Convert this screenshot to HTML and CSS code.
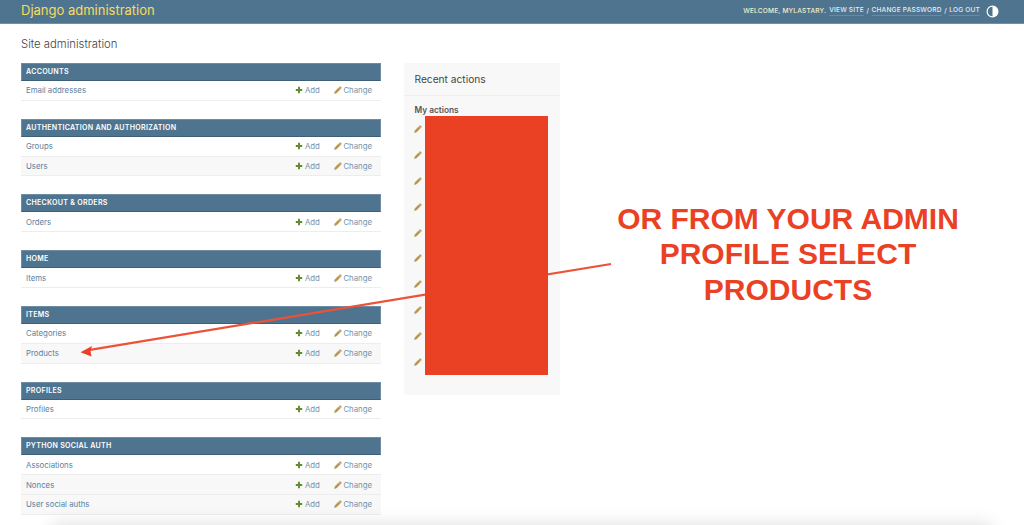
FILE: index.html
```html
<!DOCTYPE html>
<html lang="en">
<head>
<meta charset="utf-8">
<title>Site administration | Django site admin</title>
<link rel="stylesheet" href="styles.css">
</head>
<body>
<svg class="defs" width="0" height="0" aria-hidden="true">
  <defs>
    <symbol id="plus" viewBox="0 0 10 10"><path d="M3.800 1h2.400v2.800H9v2.400H6.200V9H3.800V6.200H1V3.800h2.800z"/></symbol>
    <symbol id="pencil" viewBox="0 0 10 10"><path d="M7.600.6l1.800 1.800-1 1L6.600 1.600zM5.900 2.300l1.800 1.800-4.500 4.500-2.600.8.800-2.600z" stroke-width=".7" stroke-linejoin="round"/></symbol>
  </defs>
</svg>
<header class="header">
  <div class="brand">Django administration</div>
  <div class="tools">
    <span class="welcome">WELCOME, MYLASTARY.</span>
    <a>VIEW SITE</a><span class="sep">/</span><a>CHANGE PASSWORD</a><span class="sep">/</span><a>LOG OUT</a>
    <svg class="theme" viewBox="0 0 14 14"><circle cx="7" cy="7" r="5.800" fill="none" stroke="#fff" stroke-width="1.300"/><path d="M7 1.200a5.800 5.800 0 0 1 0 11.600z" fill="#fff"/></svg>
  </div>
</header>
<main class="content">
  <h1 class="title">Site administration</h1>
  <div class="columns">
    <div class="apps">
      <section class="module">
        <h2 class="caption">ACCOUNTS</h2>
        <div class="row"><span class="name">Email addresses</span><span class="act add"><svg><use href="#plus"/></svg>Add</span><span class="act chg"><svg><use href="#pencil"/></svg>Change</span></div>
      </section>
      <section class="module">
        <h2 class="caption">AUTHENTICATION AND AUTHORIZATION</h2>
        <div class="row"><span class="name">Groups</span><span class="act add"><svg><use href="#plus"/></svg>Add</span><span class="act chg"><svg><use href="#pencil"/></svg>Change</span></div>
        <div class="row"><span class="name">Users</span><span class="act add"><svg><use href="#plus"/></svg>Add</span><span class="act chg"><svg><use href="#pencil"/></svg>Change</span></div>
      </section>
      <section class="module">
        <h2 class="caption">CHECKOUT &amp; ORDERS</h2>
        <div class="row"><span class="name">Orders</span><span class="act add"><svg><use href="#plus"/></svg>Add</span><span class="act chg"><svg><use href="#pencil"/></svg>Change</span></div>
      </section>
      <section class="module">
        <h2 class="caption">HOME</h2>
        <div class="row"><span class="name">Items</span><span class="act add"><svg><use href="#plus"/></svg>Add</span><span class="act chg"><svg><use href="#pencil"/></svg>Change</span></div>
      </section>
      <section class="module">
        <h2 class="caption">ITEMS</h2>
        <div class="row"><span class="name">Categories</span><span class="act add"><svg><use href="#plus"/></svg>Add</span><span class="act chg"><svg><use href="#pencil"/></svg>Change</span></div>
        <div class="row"><span class="name">Products</span><span class="act add"><svg><use href="#plus"/></svg>Add</span><span class="act chg"><svg><use href="#pencil"/></svg>Change</span></div>
      </section>
      <section class="module">
        <h2 class="caption">PROFILES</h2>
        <div class="row"><span class="name">Profiles</span><span class="act add"><svg><use href="#plus"/></svg>Add</span><span class="act chg"><svg><use href="#pencil"/></svg>Change</span></div>
      </section>
      <section class="module">
        <h2 class="caption">PYTHON SOCIAL AUTH</h2>
        <div class="row"><span class="name">Associations</span><span class="act add"><svg><use href="#plus"/></svg>Add</span><span class="act chg"><svg><use href="#pencil"/></svg>Change</span></div>
        <div class="row"><span class="name">Nonces</span><span class="act add"><svg><use href="#plus"/></svg>Add</span><span class="act chg"><svg><use href="#pencil"/></svg>Change</span></div>
        <div class="row"><span class="name">User social auths</span><span class="act add"><svg><use href="#plus"/></svg>Add</span><span class="act chg"><svg><use href="#pencil"/></svg>Change</span></div>
      </section>
    </div>
    <aside class="recent">
      <h2 class="recent-title">Recent actions</h2>
      <h3 class="recent-sub">My actions</h3>
      <ul class="recent-list">
        <li><svg><use href="#pencil"/></svg></li>
        <li><svg><use href="#pencil"/></svg></li>
        <li><svg><use href="#pencil"/></svg></li>
        <li><svg><use href="#pencil"/></svg></li>
        <li><svg><use href="#pencil"/></svg></li>
        <li><svg><use href="#pencil"/></svg></li>
        <li><svg><use href="#pencil"/></svg></li>
        <li><svg><use href="#pencil"/></svg></li>
        <li><svg><use href="#pencil"/></svg></li>
        <li><svg><use href="#pencil"/></svg></li>
      </ul>
    </aside>
  </div>
</main>
<svg class="arrow" viewBox="0 0 1024 525" aria-hidden="true">
  <path d="M611 264L90 349.800" fill="none" stroke="#ec5237" stroke-width="2.200"/>
  <path d="M80.500 352.300L92 346L90.500 351L91.500 356.500z" fill="#ea4126"/>
</svg>
<div class="redact"></div>
<p class="callout">OR FROM YOUR ADMIN<br>PROFILE SELECT<br>PRODUCTS</p>
<div class="edge-shadow"></div>
</body>
</html>
```

FILE: styles.css
```css
* { box-sizing: border-box; }
html, body { margin: 0; height: 525px; overflow: hidden; background: #fff; }
body { font-family: Inter, Roboto, "Liberation Sans", sans-serif; color: #333; position: relative; }
.defs { position: absolute; }

.header { height: 24px; background: #4f7490; border-bottom: 1px solid #6f90a8; display: flex; align-items: center; justify-content: space-between; padding: 0 25px 3px 21px; }
.brand { color: #f5dd5d; font-size: 13px; line-height: 20px; }
.tools { display: flex; align-items: center; color: #fff; font-size: 6.550px; font-weight: 500; letter-spacing: .2px; white-space: nowrap; margin-top: 2px; }
.welcome { color: #f4f0c8; margin-right: 3px; }
.tools a { color: #e6eef3; border-bottom: 1px solid #648aa5; line-height: 9px; }
.sep { margin: 0 2.500px; color: #e6eef3; }
.theme { width: 13px; height: 13px; margin-left: 6px; }

.content { padding: 0 21px; }
.title { margin: 13px 0 12px; font-size: 11.300px; line-height: 14px; font-weight: 300; color: #444; }
.columns { display: flex; align-items: flex-start; gap: 23px; }
.apps { width: 360px; flex: none; }
.module { margin-bottom: 18px; }
.caption { margin: 0; height: 18px; background: #4f7490; border: 1px solid #6e8ca3; border-bottom-color: #3e5f78; color: #fff; font-size: 7.100px; font-weight: 600; letter-spacing: .27px; line-height: 16px; padding: 0 4px; }
.row { height: 19.800px; display: flex; align-items: center; border-bottom: 1px solid #ededed; font-size: 7.800px; padding: 0 9px 0 5px; }
.row + .row { background: #f8f8f8; }
.name { flex: 1; color: #5d819c; }
.act { display: flex; align-items: center; color: #7493aa; }
.act svg { width: 8px; height: 8px; margin-right: 1.500px; }
.add { margin-right: 14px; }
.add svg { fill: #5f8c2f; }
.chg svg { fill: #b8914a; stroke: #b8914a; }

.recent { width: 156px; height: 332px; background: #f8f8f8; flex: none; }
.recent-title { margin: 0; height: 33px; border-bottom: 1px solid #efefef; font-size: 10.200px; font-weight: 400; line-height: 33px; padding-left: 10.500px; color: #444; }
.recent-sub { margin: 9px 0 0; font-size: 8.300px; font-weight: 600; line-height: 10px; padding-left: 10.500px; color: #555; }
.recent-list { list-style: none; margin: 10px 0 0; padding: 0 0 0 10px; }
.recent-list li { height: 25.900px; }
.recent-list svg { width: 8px; height: 8px; fill: #b8914a; stroke: #b8914a; display: block; }

.arrow { position: absolute; inset: 0; width: 1024px; height: 525px; pointer-events: none; }
.redact { position: absolute; left: 425px; top: 116px; width: 123px; height: 259px; background: #ea4125; }
.callout { position: absolute; left: 590px; top: 200.500px; width: 396px; margin: 0; text-align: center; color: #ea4125; font-family: "Liberation Sans", Arial, sans-serif; font-weight: 700; font-size: 30px; line-height: 35.500px; }
.edge-shadow { position: absolute; left: 60px; right: 40px; top: 532px; height: 10px; box-shadow: 0 0 18px 8px rgba(0,0,0,.13); pointer-events: none; }
```
